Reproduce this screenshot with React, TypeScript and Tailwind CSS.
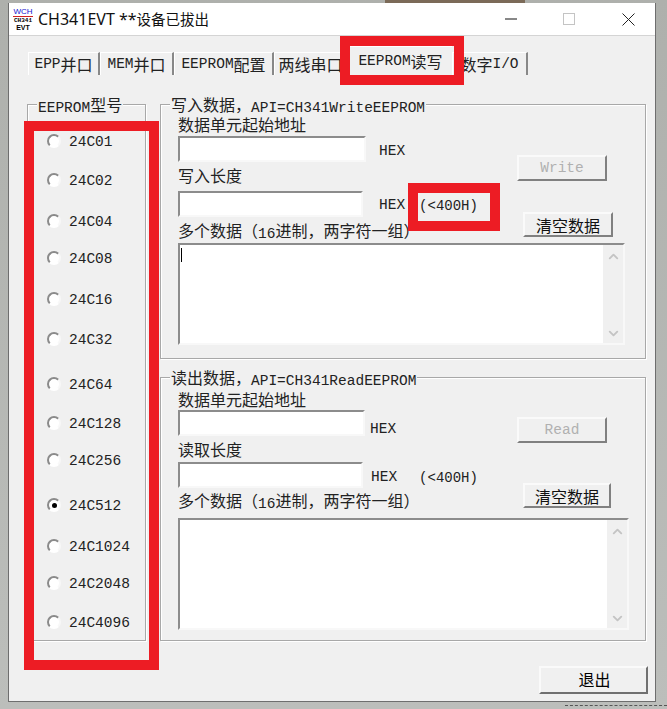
import React from "react";
import { ChevronDown, ChevronUp } from "lucide-react";

const mono = "font-['Liberation_Mono','Noto_Sans_CJK_SC',monospace]";

// latin runs stay mono, chinese runs are a bit bigger like SimSun in the shot
const Txt = ({ children }: { children: string }) => (
	<>
		{children.split(/([\u4e00-\u9fff，（）]+)/).map((part, i) =>
			/[\u4e00-\u9fff，（）]/.test(part) ? (
				<span key={i} className="relative -top-[1px] font-['Noto_Sans_CJK_SC',sans-serif] text-[16px]">
					{part}
				</span>
			) : (
				<span key={i}>{part}</span>
			),
		)}
	</>
);

const chips = [
	{ name: "24C01", gap: "mt-[26px]" },
	{ name: "24C02", gap: "mt-[19px]" },
	{ name: "24C04", gap: "mt-[21px]" },
	{ name: "24C08", gap: "mt-[17px]" },
	{ name: "24C16", gap: "mt-[21px]" },
	{ name: "24C32", gap: "mt-[20px]" },
	{ name: "24C64", gap: "mt-[25px]" },
	{ name: "24C128", gap: "mt-[19px]" },
	{ name: "24C256", gap: "mt-[17px]" },
	{ name: "24C512", gap: "mt-[25px]", checked: true },
	{ name: "24C1024", gap: "mt-[21px]" },
	{ name: "24C2048", gap: "mt-[17px]" },
	{ name: "24C4096", gap: "mt-[19px]" },
];

const Radio = ({ name, gap, checked }: { name: string; gap: string; checked?: boolean }) => (
	<div className={`flex h-5 items-center pl-[19px] ${gap}`}>
		<div className="flex h-[14px] w-[14px] items-center justify-center rounded-full border-2 border-t-[#8a8a8a] border-r-[#f8f8f8] border-b-white border-l-[#8a8a8a] bg-white">
			{checked && <div className="h-[5px] w-[5px] rounded-full bg-black" />}
		</div>
		<span className="ml-[8px] translate-y-[2px] text-[#222]">{name}</span>
	</div>
);

const Input = ({ width }: { width: string }) => (
	<div className={`h-[26px] border-2 border-t-[#8c8c8c] border-r-[#f8f8f8] border-b-[#f8f8f8] border-l-[#8c8c8c] bg-white ${width}`} />
);

const Button = ({ label, size, disabled }: { label: string; size: string; disabled?: boolean }) => (
	<div
		className={`flex items-center justify-center border-2 border-t-[#fafafa] border-r-[#808080] border-b-[#808080] border-l-[#fafafa] bg-[#f0f0f0] pt-[2px] ${size} ${disabled ? "text-[#b0b0b0]" : "text-[#111]"}`}
	>
		<Txt>{label}</Txt>
	</div>
);

const Memo = ({ height, width, caret }: { height: string; width: string; caret?: boolean }) => (
	<div className={`flex border-2 border-t-[#8c8c8c] border-r-[#f8f8f8] border-b-[#f8f8f8] border-l-[#8c8c8c] bg-white ${height} ${width}`}>
		<div className="flex-1 pt-[3px] pl-[1px]">{caret && <div className="h-[14px] w-[1px] bg-black" />}</div>
		<div className="flex w-[20px] flex-col items-center justify-between bg-[#f0f0f0] pt-[4px] pb-[2px] text-[#c4c4c4]">
			<ChevronUp size={15} strokeWidth={3} />
			<ChevronDown size={15} strokeWidth={3} />
		</div>
	</div>
);

const Group = ({ title, size, children }: { title: string; size: string; children: React.ReactNode }) => (
	<div className={`relative border border-[#a8a8a8] shadow-[inset_1px_1px_0_#fff,1px_1px_0_#fff] ${size}`}>
		<span className="absolute -top-[10px] left-[9px] bg-[#f0f0f0] px-[1px] leading-[20px] whitespace-nowrap text-[#222]">
			<Txt>{title}</Txt>
		</span>
		{children}
	</div>
);

const Label = ({ text, className }: { text: string; className: string }) => (
	<div className={`h-5 pt-[1px] leading-5 whitespace-nowrap text-[#222] ${className}`}>
		<Txt>{text}</Txt>
	</div>
);

const WCHIcon = () => (
	<div className="flex h-[22px] w-[22px] flex-col items-center font-['Liberation_Sans',sans-serif] leading-none font-bold">
		<span className="border-b border-[#d02020] text-[8px] font-normal text-[#1515d0]">WCH</span>
		<span className="mt-[1px] font-['Liberation_Mono',monospace] text-[6px] text-black">CH341</span>
		<span className="text-[7px] text-black">EVT</span>
	</div>
);

const Tab = ({ label, active, size }: { label: string; active?: boolean; size: string }) => (
	<div
		className={`flex items-center justify-center border-t border-l border-white pt-[2px] text-[#222] ${size} ${active ? "" : "border-r-2 border-r-[#888]"}`}
	>
		<Txt>{label}</Txt>
	</div>
);

const RedBox = ({ place }: { place: string }) => <div className={`absolute border-[10px] border-[#ed1c24] ${place}`} />;

export default function App() {
	return (
		<div className={`relative h-[709px] w-[667px] overflow-hidden bg-gradient-to-b from-[#aeb0ac] to-[#bcbebb] pt-[3px] pl-[8px] text-[14.5px] ${mono}`}>
			<div className="absolute top-0 left-[385px] h-[3px] w-[140px] bg-[#7b6a58]" />
			<div className="absolute top-[705px] left-[565px] w-[102px] border-t border-dashed border-[#555]" />

			<div className="h-[699px] w-[648px] border border-t-0 border-[#6e6e6e] bg-[#f0f0f0]">
				{/* title bar */}
				<div className="flex h-[33px] items-center border-b border-[#d4d4d4] bg-white pl-[3px]">
					<WCHIcon />
					<span className="ml-[4px] font-['Noto_Sans','Noto_Sans_CJK_SC',sans-serif] text-[16px] text-[#111]">
						CH341EVT **<span className="text-[14.5px]">设备已拔出</span>
					</span>
					<div className="ml-auto flex items-center">
						<svg className="h-[12px] w-[12px]" viewBox="0 0 12 12">
							<path d="M0 6h12" stroke="#111" strokeWidth="1" />
						</svg>
						<svg className="ml-[46px] h-[12px] w-[12px]" viewBox="0 0 12 12">
							<rect x="0.5" y="0.5" width="11" height="11" fill="none" stroke="#c4c4c4" />
						</svg>
						<svg className="mr-[20px] ml-[47px] h-[13px] w-[13px]" viewBox="0 0 13 13">
							<path d="M0.5 0.5l12 12M12.5 0.5l-12 12" stroke="#222" strokeWidth="1" />
						</svg>
					</div>
				</div>

				{/* tabs */}
				<div className="flex h-[39px] items-end pl-[19px]">
					<Tab label="EPP并口" size="h-[23px] w-[72px]" />
					<Tab label="MEM并口" size="h-[23px] w-[74px]" />
					<Tab label="EEPROM配置" size="h-[23px] w-[100px]" />
					<Tab label="两线串口" size="h-[23px] w-[74px]" />
					<Tab label="EEPROM读写" active size="h-[29px] w-[104px]" />
					<Tab label="数字I/O" size="h-[23px] w-[76px]" />
				</div>

				<div className="mt-[29px] flex h-[537px] pl-[18px]">
					<Group title="EEPROM型号" size="h-[537px] w-[119px]">
						{chips.map((c) => (
							<Radio key={c.name} {...c} />
						))}
					</Group>

					<div className="ml-[14px] flex flex-col">
						<Group title="写入数据，API=CH341WriteEEPROM" size="h-[255px] w-[486px]">
							<div className="flex pl-[17px]">
								<div className="w-[340px]">
									<Label text="数据单元起始地址" className="mt-[9px]" />
									<div className="mt-[2px] flex items-center">
										<Input width="w-[188px]" />
										<span className="ml-[13px] translate-y-[3px] text-[#222]">HEX</span>
									</div>
									<Label text="写入长度" className="mt-[3px]" />
									<div className="mt-[6px] flex items-center">
										<Input width="w-[185px]" />
										<span className="ml-[16px] translate-y-[2px] text-[#222]">HEX</span>
										<span className="ml-[14px] translate-y-[2px] text-[14px] text-[#222]">(&lt;400H)</span>
									</div>
									<Label text="多个数据（16进制，两字符一组）" className="mt-[3px]" />
								</div>
								<div className="flex flex-col items-start">
									<div className="mt-[50px] ml-[-1px]">
										<Button label="Write" size="h-[26px] w-[90px]" disabled />
									</div>
									<div className="mt-[31px] ml-[5px]">
										<Button label="清空数据" size="h-[25px] w-[90px]" />
									</div>
								</div>
							</div>
							<div className="mt-[3px] pl-[17px]">
								<Memo width="w-[447px]" height="h-[102px]" caret />
							</div>
						</Group>

						<Group title="读出数据，API=CH341ReadEEPROM" size="mt-[18px] h-[264px] w-[486px]">
							<div className="flex pl-[17px]">
								<div className="w-[340px]">
									<Label text="数据单元起始地址" className="mt-[11px]" />
									<div className="mt-[1px] flex items-center">
										<Input width="w-[187px]" />
										<span className="ml-[5px] translate-y-[7px] text-[#222]">HEX</span>
									</div>
									<Label text="读取长度" className="mt-[3px]" />
									<div className="mt-[3px] flex items-center">
										<Input width="w-[185px]" />
										<span className="ml-[8px] translate-y-[3px] text-[#222]">HEX</span>
										<span className="ml-[22px] translate-y-[3px] text-[14px] text-[#222]">(&lt;400H)</span>
									</div>
									<Label text="多个数据（16进制，两字符一组）" className="mt-[2px]" />
								</div>
								<div className="flex flex-col items-start">
									<div className="mt-[39px] ml-[-1px]">
										<Button label="Read" size="h-[26px] w-[90px]" disabled />
									</div>
									<div className="mt-[40px] ml-[5px]">
										<Button label="清空数据" size="h-[25px] w-[88px]" />
									</div>
								</div>
							</div>
							<div className="mt-[8px] pl-[17px]">
								<Memo width="w-[451px]" height="h-[112px]" />
							</div>
						</Group>
					</div>
				</div>

				<div className="mt-[25px] flex justify-end pr-[7px]">
					<div className="flex h-[28px] w-[109px] items-center justify-center border-2 border-t-[#fafafa] border-r-[#707070] border-b-[#707070] border-l-[#fafafa] pl-[2px]">
						<Txt>退出</Txt>
					</div>
				</div>
			</div>

			{/* red annotation boxes drawn over the shot */}
			<RedBox place="top-[36px] left-[340px] h-[49px] w-[124px]" />
			<RedBox place="top-[121px] left-[24px] h-[549px] w-[135px]" />
			<RedBox place="top-[183px] left-[408px] h-[48px] w-[92px]" />
		</div>
	);
}
